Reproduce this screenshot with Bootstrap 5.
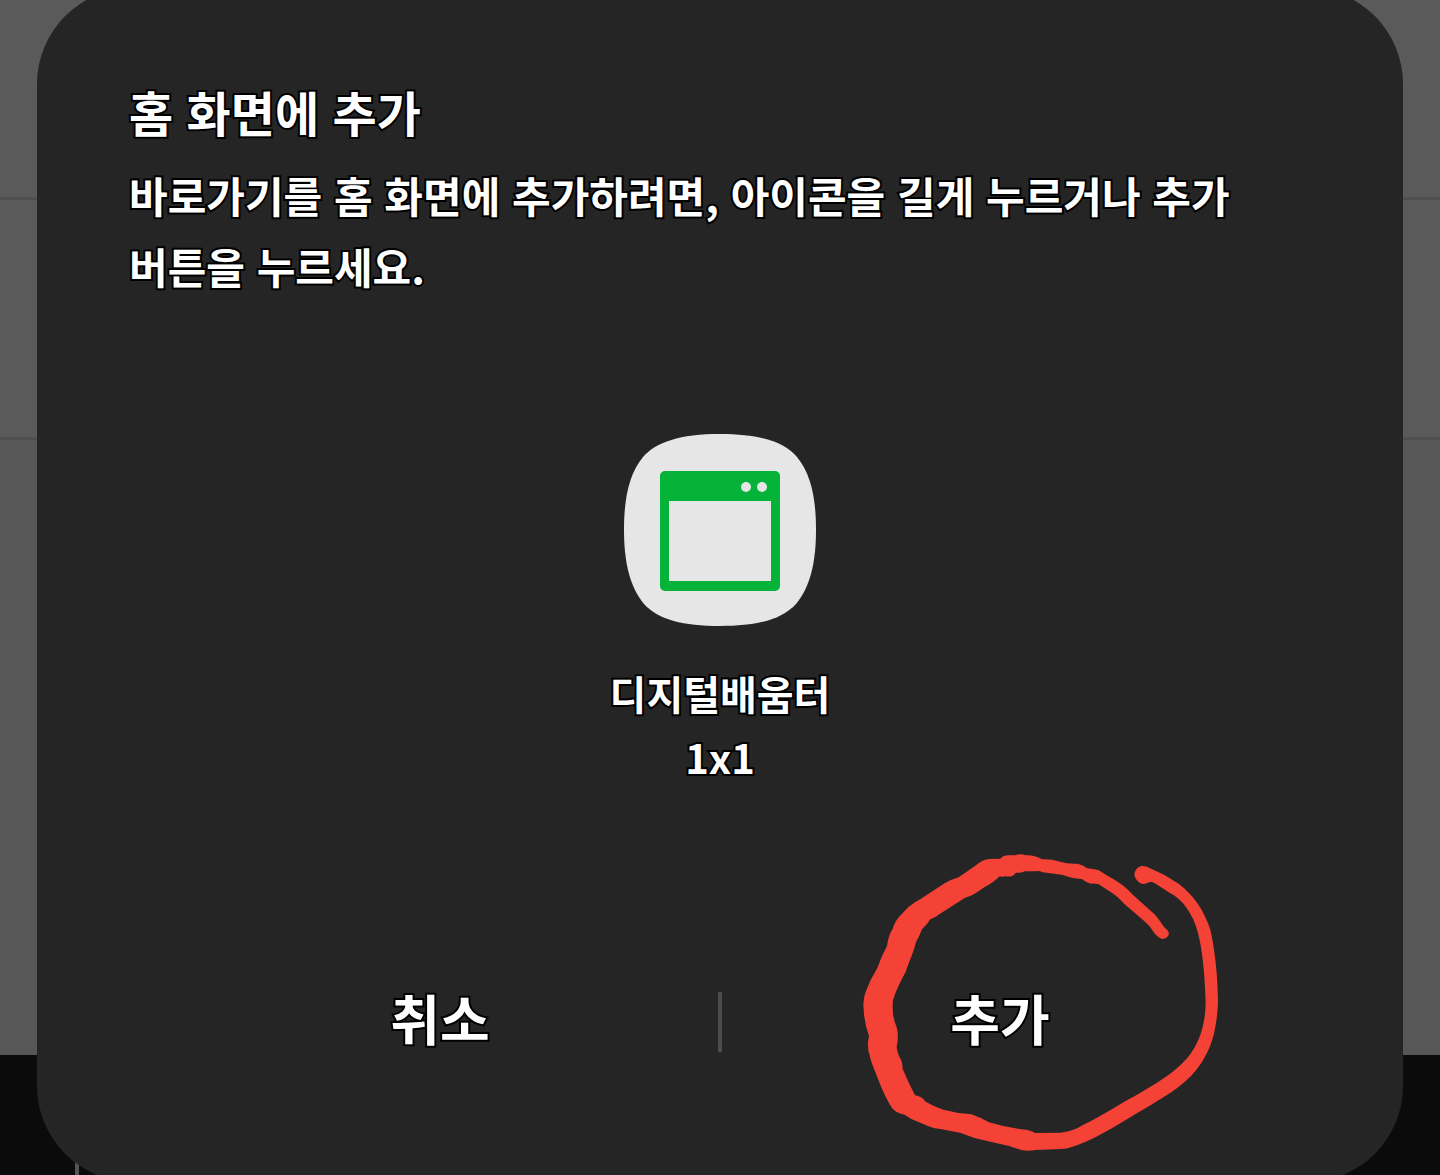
<!DOCTYPE html>
<html lang="ko">
<head>
<meta charset="utf-8">
<meta name="viewport" content="width=device-width, initial-scale=1">
<title>홈 화면에 추가</title>
<link href="https://cdn.jsdelivr.net/npm/bootstrap@5.3.0/dist/css/bootstrap.min.css" rel="stylesheet">
<style>
  body { font-family: "Noto Sans CJK KR", sans-serif; background: #0b0b0b; }
  .stage { display: grid; min-height: 100vh; overflow: hidden; }
  .stage > * { grid-area: 1 / 1; }
  .backdrop-list { background: #5a5a5a; }
  .list-line { border-bottom: 3px solid #505050; }
  .line-first { height: 200px; }
  .line-next { height: 240px; }
  .line-last { height: 615px; background: #575757; }
  .nav-strip { background: #0b0b0b; padding: 105px 0 0 75px; }
  .nav-tick { width: 4px; height: 100%; background: #555; }
  .sheet { margin: -12px 37px -7px; padding: 87px 92px 104px; border-radius: 96px; background: #252525; }
  .outlined { color: #fff; font-weight: 700; -webkit-text-stroke: 4px #000; paint-order: stroke fill; }
  .sheet-title { font-size: 48px; line-height: 72px; margin-bottom: 12px; }
  .sheet-text { font-size: 42px; line-height: 71px; margin-bottom: 132px; word-break: keep-all; }
  .app-icon { width: 194px; height: 194px; }
  .app-label { font-size: 40px; line-height: 64px; margin-top: 34px; }
  .actions { margin-top: 177px; padding: 0 33px; }
  .action { height: 112px; border: 0; background: none; font-size: 54px; line-height: 80px; padding: 0 0 8px; }
  .divider { width: 4px; height: 60px; background: #4d4d4d; }
  .scribble { left: 50%; top: 50%; margin: -182px 0 0 -150px; width: 380px; height: 335px; pointer-events: none; }
</style>
<script src="https://cdn.jsdelivr.net/npm/bootstrap@5.3.0/dist/js/bootstrap.bundle.min.js"></script>
</head>
<body>
<div class="stage">
  <div class="backdrop-list d-flex flex-column" aria-hidden="true">
    <div class="list-line line-first"></div>
    <div class="list-line line-next"></div>
    <div class="line-last"></div>
    <div class="nav-strip flex-grow-1"><div class="nav-tick"></div></div>
  </div>
  <main class="sheet" role="dialog" aria-labelledby="sheetTitle">
    <h1 class="sheet-title outlined" id="sheetTitle">홈 화면에 추가</h1>
    <p class="sheet-text outlined">바로가기를 홈 화면에 추가하려면, 아이콘을 길게 누르거나 추가 버튼을 누르세요.</p>
    <div class="d-flex flex-column align-items-center">
      <svg class="app-icon" viewBox="0 0 194 194" aria-hidden="true">
        <path fill="#e6e6e6" d="M97 1C137 1 161 9 174 24C188 41 193 65 193 97C193 130 187 154 173 171C158 187 134 193 97 193C60 193 36 187 21 171C7 154 1 130 1 97C1 65 6 41 20 24C33 9 57 1 97 1Z"/>
        <rect x="37" y="38" width="120" height="120" rx="5" fill="#04b338"/>
        <path fill="#e6e6e6" d="M46 68h102v80H46z"/>
        <circle cx="123" cy="54" r="5" fill="#e6e6e6"/>
        <circle cx="139" cy="54" r="5" fill="#e6e6e6"/>
      </svg>
      <div class="app-label outlined text-center">디지털배움터<br>1x1</div>
    </div>
    <div class="actions d-flex align-items-center">
      <button type="button" class="action outlined flex-fill w-50">취소</button>
      <div class="divider flex-shrink-0"></div>
      <button type="button" class="action outlined flex-fill w-50 position-relative">추가
        <svg class="scribble position-absolute" viewBox="0 0 1140 1005" aria-hidden="true">
          <path fill="#f44336" d="M936 297Q921 291 911 276Q899 256 880 241L824 193Q808 173 790 161L746 133Q735 129 722 131Q707 127 697 118L668 114L635 104L578 97Q566 91 554 94L525 94Q510 100 498 98Q487 113 466 109Q455 111 449 109Q432 127 404 141L374 161Q361 169 345 173L268 223Q255 234 241 238Q232 253 216 268Q208 290 198 306C190 340 178 362 167 396C153 420 140 447 129 480Q127 496 129 522Q132 543 140 562Q145 580 143 602L140 621Q143 645 154 661Q158 673 158 687Q176 729 195 766Q214 768 227 785Q251 799 280 809L325 819L364 823Q393 833 417 847Q472 864 529 869Q543 872 556 879L633 878Q673 872 700 854C759 827 807 792 856 767C911 735 967 704 1012 654C1048 611 1067 552 1067 486C1064 403 1058 330 1043 275C1028 220 998 179 960 159L912 128Q902 123 890 130Q876 135 866 126Q853 115 853 102Q857 82 874 78Q889 77 900 85L942 104L986 131C1034 169 1062 211 1081 269C1095 330 1104 414 1104 488C1100 564 1088 615 1056 666C1017 728 957 762 899 797C848 825 795 862 739 890C697 910 661 926 632 927L557 930Q536 934 516 931L477 918L376 895L330 878L275 868Q250 866 232 857L184 837L164 824Q141 821 126 804C102 766 88 726 72 686Q61 660 59 646Q50 622 57 588Q43 552 41 507Q38 481 46 458Q61 417 82 384Q94 349 111 318Q115 286 128 266Q135 244 147 231L176 200Q194 186 212 177L284 130Q304 118 326 112L375 78Q397 59 416 57L451 56Q461 46 475 46L496 46Q511 40 527 46Q552 44 576 58Q604 57 630 65Q655 73 682 71Q699 75 712 85Q729 86 746 91L779 111Q812 129 834 149L850 166L916 225Q932 245 942 261Q954 269 957 280Q955 296 936 297Z"/>
        </svg>
      </button>
    </div>
  </main>
</div>
</body>
</html>
